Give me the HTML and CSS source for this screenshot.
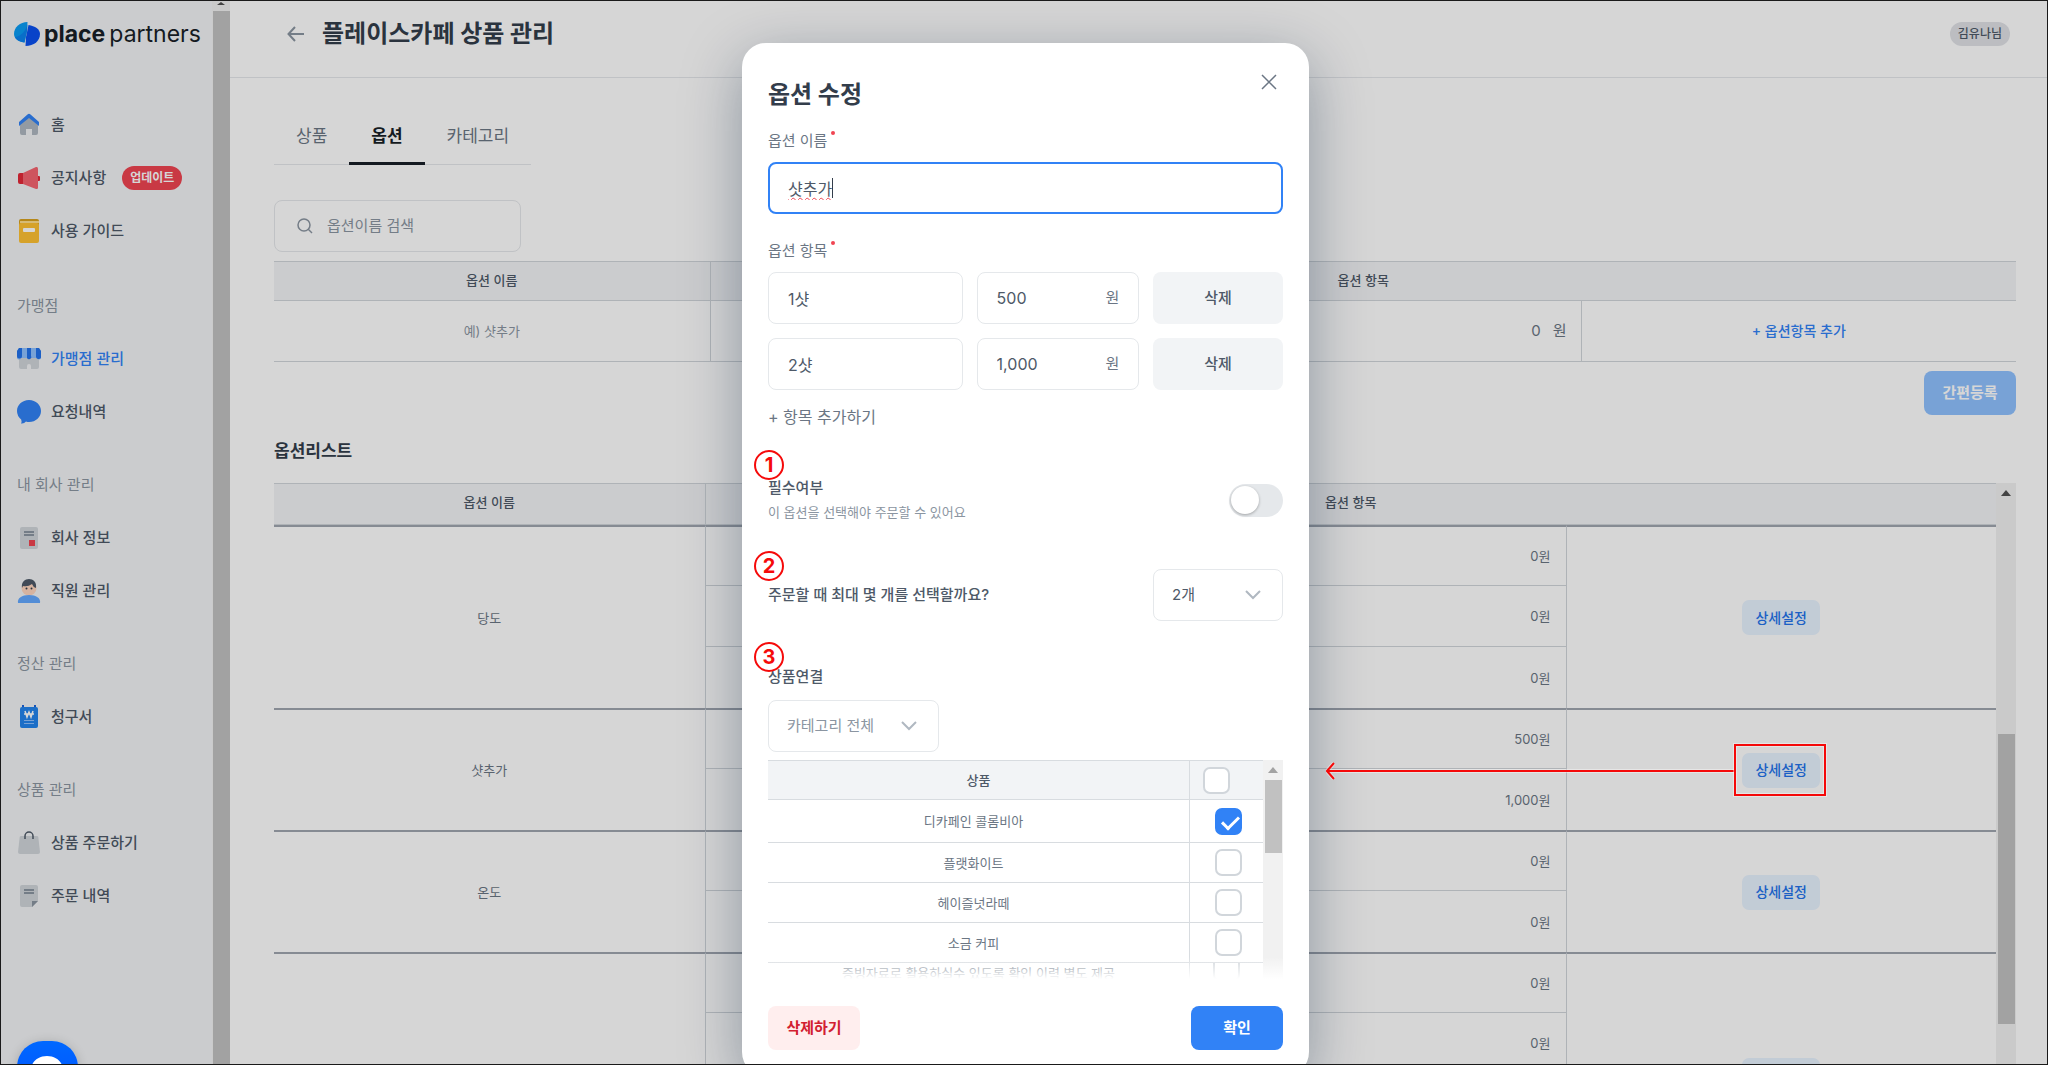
FILE: index.html
```html
<!DOCTYPE html>
<html lang="ko">
<head>
<meta charset="utf-8">
<meta name="viewport" content="width=device-width, initial-scale=1">
<title>플레이스카페 상품 관리</title>
<link rel="stylesheet" href="styles.css">
</head>
<body>
<div class="app">
  <aside class="sidebar">
    <div class="sidebar-body">
      <a class="logo" href="#">
        <svg width="26" height="24" viewBox="0 0 26 24" aria-hidden="true">
          <path d="M13.500 0 13 9 10.500 20.500C4 19.500 0 16.500 0 12 0 5 6 0 13.500 0z" fill="#0a9cf5"/>
          <path d="M13.500 2 13 9 10.500 20.500C6 20 2 18 1 15 8 14 12 8 13.500 2z" fill="#0b84f0"/>
          <path d="M14.500 3C21 4 26 7 26 12c0 7-6 12-14.500 12L12 15z" fill="#0a50f0"/>
        </svg>
        <span class="logo-text"><b>place</b><span>partners</span></span>
      </a>
      <nav class="menu">
        <ul class="menu-group menu-top">
          <li><a href="#"><svg viewBox="0 0 24 24"><path d="M3 10l9-7 9 7v10a2 2 0 0 1-2 2h-4v-6H9v6H5a2 2 0 0 1-2-2z" fill="#b0b8c1"/><path d="M2 9l8.500-7.500a2 2 0 0 1 3 0L22 9v4l-10-8L2 13z" fill="#3182f6"/></svg>홈</a></li>
          <li><a href="#"><svg viewBox="0 0 24 24"><rect x="20" y="10" width="3" height="5" rx="1" fill="#e42939"/><path d="M6 7l13-6q2-.500 2 1.500v19q0 2-2 1.500L6 18z" fill="#f66570"/><path d="M3 7h3v11H3a2 2 0 0 1-2-2V9a2 2 0 0 1 2-2z" fill="#e42939"/></svg>공지사항<em class="badge">업데이트</em></a></li>
          <li><a href="#"><svg viewBox="0 0 24 24"><rect x="2" y="0" width="20" height="8" rx="2" fill="#d8a11e"/><rect x="3" y="2" width="19" height="2" fill="#ffdf8d"/><rect x="2" y="4" width="20" height="20" rx="2" fill="#ffc233"/><rect x="6" y="9" width="12" height="4" rx="1" fill="#fff"/></svg>사용 가이드</a></li>
        </ul>
        <h2>가맹점</h2>
        <ul class="menu-group">
          <li><a class="active" href="#"><svg viewBox="0 0 24 24"><path d="M2 8h20v12a2 2 0 0 1-2 2h-6v-3a2 2 0 0 0-4 0v3H4a2 2 0 0 1-2-2z" fill="#d1d6db"/><path d="M2 1h20l2 3v6a2 2 0 0 1-4 1H4a2 2 0 0 1-4-1V4z" fill="#90c2ff"/><path d="M2 1h3v8a2 2 0 0 1-5 0V4zM10 1h4v8a2 2 0 0 1-4 2zM19 1h3l2 3v5a2 2 0 0 1-5 1z" fill="#2272eb"/></svg>가맹점 관리</a></li>
          <li><a href="#"><svg viewBox="0 0 24 24"><path d="M12 0c7 0 12 5 12 11s-5 11-12 11c-1 0-2 0-3-.500Q7 24 4 23.500q1-2 .200-4Q0 16 0 11C0 5 5 0 12 0z" fill="#3182f6"/></svg>요청내역</a></li>
        </ul>
        <h2>내 회사 관리</h2>
        <ul class="menu-group">
          <li><a href="#"><svg viewBox="0 0 24 24"><rect x="3" y="1" width="18" height="22" rx="2" fill="#d1d6db"/><path d="M7 5h10v2H7zM7 8h10v2H7z" fill="#8b95a1"/><rect x="12" y="14" width="6" height="6" fill="#f04452"/></svg>회사 정보</a></li>
          <li><a href="#"><svg viewBox="0 0 24 24"><circle cx="12" cy="9" r="7.500" fill="#ffd6bf"/><path d="M5 9C4 3 8 0 12 0s8 3 7 9q-3-1-4-4-4 3-9 2z" fill="#4e5968"/><circle cx="9.500" cy="9.500" r="1" fill="#333d4b"/><circle cx="14.500" cy="9.500" r="1" fill="#333d4b"/><path d="M1 24c-1-5 4-8 11-8s12 3 11 8z" fill="#64a8ff"/></svg>직원 관리</a></li>
        </ul>
        <h2>정산 관리</h2>
        <ul class="menu-group">
          <li><a href="#"><svg viewBox="0 0 24 24"><path d="M6 0v4M18 0v4" stroke="#1b64da" stroke-width="2"/><rect x="3" y="2" width="18" height="21" rx="2" fill="#2283ee"/><path d="M8 6l2 6 2-5 2 5 2-6M7 9h10" stroke="#fff" stroke-width="1.500" fill="none"/><path d="M7 15.500h10M7 18.500h10" stroke="#90c2ff" stroke-width="1"/></svg>청구서</a></li>
        </ul>
        <h2>상품 관리</h2>
        <ul class="menu-group">
          <li><a href="#"><svg viewBox="0 0 24 24"><path d="M4 5h16q1 0 1.300 1L23 21a2 2 0 0 1-2 2H3a2 2 0 0 1-2-2L2.700 6Q3 5 4 5z" fill="#d1d6db"/><path d="M8 8V5a4 4 0 0 1 8 0v3" fill="none" stroke="#4e5968" stroke-width="1.500"/></svg>상품 주문하기</a></li>
          <li><a href="#"><svg viewBox="0 0 24 24"><path d="M5 1h14a2 2 0 0 1 2 2v14l-6 6H5a2 2 0 0 1-2-2V3a2 2 0 0 1 2-2z" fill="#d1d6db"/><path d="M7 5h10v2H7zM7 8h10v2H7zM15 23v-6h6z" fill="#8b95a1"/></svg>주문 내역</a></li>
        </ul>
      </nav>
    </div>
    <div class="scrollbar side-scroll"><i class="arrow-up"></i><i class="thumb"></i></div>
  </aside>

  <main class="main">
    <header class="topbar">
      <button class="icon-btn" aria-label="뒤로"><svg width="18" height="16" viewBox="0 0 18 16"><path d="M17 8H2M8 1L1.500 8 8 15" fill="none" stroke="#8b95a1" stroke-width="2"/></svg></button>
      <h1>플레이스카페 상품 관리</h1>
      <span class="user">김유나님</span>
    </header>
    <div class="content">
      <nav class="tabs"><a href="#">상품</a><a href="#" class="on">옵션</a><a href="#">카테고리</a></nav>
      <label class="search">
        <svg width="16" height="16" viewBox="0 0 16 16"><circle cx="7" cy="7" r="6" fill="none" stroke="#8b95a1" stroke-width="1.500"/><path d="M11 11l4 4" stroke="#8b95a1" stroke-width="1.500"/></svg>
        <input type="search" placeholder="옵션이름 검색" aria-label="옵션이름 검색">
      </label>
      <table class="grid quick">
        <thead><tr><th>옵션 이름</th><th colspan="3">옵션 항목</th></tr></thead>
        <tbody><tr><td class="hint">예) 샷추가</td><td></td><td class="quick-price"><span>0</span><span>원</span></td><td><button class="link-btn">+ 옵션항목 추가</button></td></tr></tbody>
      </table>
      <button class="quick-btn">간편등록</button>
      <h2 class="list-title">옵션리스트</h2>
      <div class="list">
        <table class="grid options">
          <thead><tr><th>옵션 이름</th><th colspan="3">옵션 항목</th></tr></thead>
          <tbody>
            <tr><td rowspan="3">당도</td><td></td><td class="price">0원</td><td rowspan="3"><button class="detail">상세설정</button></td></tr>
            <tr><td></td><td class="price">0원</td></tr>
            <tr><td></td><td class="price">0원</td></tr>
          </tbody>
          <tbody>
            <tr><td rowspan="2">샷추가</td><td></td><td class="price">500원</td><td rowspan="2"><span class="marked"><button class="detail">상세설정</button><svg class="arrow" viewBox="0 0 408 18"><path d="M1 9h407M8 1L1 9l7 8" fill="none" stroke="#fff" stroke-opacity=".4" stroke-width="4"/><path d="M1 9h407M8 1L1 9l7 8" fill="none" stroke="#f50a0a" stroke-width="2"/></svg></span></td></tr>
            <tr><td></td><td class="price">1,000원</td></tr>
          </tbody>
          <tbody>
            <tr><td rowspan="2">온도</td><td></td><td class="price">0원</td><td rowspan="2"><button class="detail">상세설정</button></td></tr>
            <tr><td></td><td class="price">0원</td></tr>
          </tbody>
          <tbody>
            <tr><td rowspan="4"></td><td></td><td class="price">0원</td><td rowspan="4"><button class="detail">상세설정</button></td></tr>
            <tr><td></td><td class="price">0원</td></tr>
            <tr><td></td><td class="price">0원</td></tr>
            <tr><td></td><td class="price">0원</td></tr>
          </tbody>
        </table>
        <div class="scrollbar list-scroll"><i class="arrow-up"></i><i class="thumb"></i></div>
      </div>
    </div>
  </main>

  <div class="overlay">
    <section class="modal" role="dialog" aria-labelledby="dlg-title">
      <button class="close" aria-label="닫기"><svg width="16" height="16" viewBox="0 0 16 16"><path d="M1 1l14 14M15 1L1 15" stroke="#6b7684" stroke-width="1.500"/></svg></button>
      <h2 id="dlg-title">옵션 수정</h2>
      <label class="label required" for="opt-name">옵션 이름</label>
      <div class="name-box"><input id="opt-name" class="field focused" value="샷추가"><i class="caret"></i></div>
      <div class="label required">옵션 항목</div>
      <div class="items">
        <input class="field" value="1샷" aria-label="항목 1 이름">
        <label class="field won"><input value="500" aria-label="항목 1 가격"><span>원</span></label>
        <button class="gray">삭제</button>
        <input class="field" value="2샷" aria-label="항목 2 이름">
        <label class="field won"><input value="1,000" aria-label="항목 2 가격"><span>원</span></label>
        <button class="gray">삭제</button>
      </div>
      <button class="add">+ 항목 추가하기</button>

      <div class="section need">
        <i class="num">1</i>
        <label for="need">필수여부<small>이 옵션을 선택해야 주문할 수 있어요</small></label>
        <input id="need" type="checkbox" class="switch">
      </div>
      <div class="section max">
        <i class="num">2</i>
        <label for="max">주문할 때 최대 몇 개를 선택할까요?</label>
        <span class="select"><select id="max"><option>2개</option></select><svg width="16" height="10" viewBox="0 0 16 10"><path d="M1 1l7 7 7-7" fill="none" stroke="#b0b8c1" stroke-width="2"/></svg></span>
      </div>
      <div class="section link">
        <i class="num">3</i>
        <label for="cat">상품연결</label>
      </div>
      <span class="select category"><select id="cat"><option>카테고리 전체</option></select><svg width="16" height="10" viewBox="0 0 16 10"><path d="M1 1l7 7 7-7" fill="none" stroke="#b0b8c1" stroke-width="2"/></svg></span>
      <div class="products">
        <table>
          <thead><tr><th>상품</th><th class="pick"><input type="checkbox" aria-label="전체 선택"></th></tr></thead>
          <tbody>
            <tr><td>디카페인 콜롬비아</td><td class="pick"><input type="checkbox" checked aria-label="디카페인 콜롬비아"></td></tr>
            <tr><td>플랫화이트</td><td class="pick"><input type="checkbox" aria-label="플랫화이트"></td></tr>
            <tr><td>헤이즐넛라떼</td><td class="pick"><input type="checkbox" aria-label="헤이즐넛라떼"></td></tr>
            <tr><td>소금 커피</td><td class="pick"><input type="checkbox" aria-label="소금 커피"></td></tr>
            <tr class="cut"><td><div>증빙자료로 활용하실수 있도록 확인 이력 별도 제공</div></td><td class="pick"><div><input type="checkbox" aria-label="증빙자료"></div></td></tr>
          </tbody>
        </table>
        <div class="scrollbar product-scroll"><i class="arrow-up"></i><i class="thumb"></i></div>
      </div>
      <footer><button class="remove">삭제하기</button><button class="ok">확인</button></footer>
    </section>
  </div>
  <button class="chat" aria-label="채팅 상담"><svg width="32" height="32" viewBox="0 0 32 32"><path d="M16 0c9 0 16 6 16 14s-7 14-16 14l-7 4v-5C4 25 0 20 0 14 0 6 7 0 16 0z" fill="#fff"/></svg></button>
</div>
</body>
</html>
```
FILE: styles.css
```css
* { box-sizing: border-box; }
body {
  margin: 0;
  font-family: Inter, "Noto Sans CJK KR", sans-serif;
  font-size: 15px;
  line-height: 20px;
  color: #4e5968;
}
button, input, select { font: inherit; color: inherit; }
button { border: 0; padding: 0; background: none; cursor: pointer; white-space: nowrap; }
a { color: inherit; text-decoration: none; }
h1, h2, ul { margin: 0; padding: 0; list-style: none; }
svg { display: block; flex: none; }

.app {
  position: relative;
  display: flex;
  height: 100vh;
  border: 1px solid #1a1a1a;
  background: #fff;
  overflow: hidden;
}

/* Scrollbars */
.scrollbar { background: #f1f1f1; flex: none; display: flex; flex-direction: column; align-items: center; }
.thumb { background: #c1c1c1; width: 17px; }
.arrow-up { border: 5px solid transparent; border-top: 0; border-bottom: 6px solid #505050; }

/* Sidebar */
.sidebar { display: flex; flex: none; width: 229px; background: #f2f4f6; }
.sidebar-body { flex: 1; padding: 20px 0 0 13px; }
.logo { display: flex; align-items: center; gap: 4px; height: 26px; color: #191f28; }
.logo-text { display: flex; gap: 4px; font-size: 23px; line-height: 26px; }
.logo-text b { font-weight: 700; }
.menu { padding: 51px 0 0 3px; }
.menu h2 { font-size: 15px; font-weight: 400; line-height: 53px; color: #8b95a1; }
.menu a { display: flex; align-items: center; gap: 10px; height: 53px; font-weight: 500; }
.menu a svg { width: 24px; height: 24px; }
.menu-group { margin-bottom: 20px; }
.menu-top { margin-bottom: 22px; }
.menu .active { color: #3182f6; }
.badge {
  margin-left: 6px; padding: 0 8px; border-radius: 12px;
  font-size: 12px; font-weight: 700; font-style: normal; line-height: 24px;
  background: #f04452; color: #fff;
}
.side-scroll { width: 18px; padding-top: 1px; }
.side-scroll .arrow-up { border-width: 0 4px 3px; margin-bottom: 6px; }
.side-scroll .thumb { flex: 1; }

/* Page */
.main { flex: 1; min-width: 0; }
.topbar { display: flex; align-items: center; height: 77px; padding: 0 37px 11px 57px; border-bottom: 1px solid #e5e8eb; }
.topbar h1 { margin-left: 17px; font-size: 24px; line-height: 32px; color: #333d4b; }
.user { margin-left: auto; padding: 0 8px; border-radius: 12px; background: #e0e2e6; font-size: 12px; font-weight: 500; line-height: 24px; }
.content { display: flex; flex-direction: column; align-items: flex-start; padding: 33px 31px 0 44px; }
.tabs { display: flex; border-bottom: 1px solid #e5e8eb; font-size: 17px; line-height: 51px; color: #6b7684; }
.tabs a { padding: 0 22px; border-bottom: 3px solid transparent; margin-bottom: -1px; }
.tabs .on { color: #191f28; font-weight: 700; border-color: #191f28; }
.search {
  display: flex; align-items: center; gap: 14px;
  width: 247px; height: 52px; margin-top: 35px; padding: 0 22px;
  border: 1px solid #e5e8eb; border-radius: 8px;
}
.search input { flex: 1; min-width: 0; border: 0; padding: 0; background: none; outline: 0; }
.search input::placeholder { color: #8b95a1; opacity: 1; }

.grid { width: 100%; table-layout: fixed; border-collapse: separate; border-spacing: 0; font-size: 13px; text-align: center; }
.grid th, .grid td { padding: 0; border-bottom: 1px solid #d1d6db; }
.grid th { height: 40px; padding-bottom: 2px; background: #f2f4f6; border-top: 1px solid #d1d6db; font-weight: 500; }
.grid th + th, .grid td + td, .options .price, .options tr:not(:first-child) td { border-left: 1px solid #d1d6db; }
.grid td { height: 61px; color: #6b7684; }
.quick { margin-top: 9px; }
.grid .hint { color: #8b95a1; }
.grid .quick-price { padding-right: 14px; text-align: right; font-size: 15px; }
.quick-price span + span { margin-left: 12px; }
.link-btn { font-size: 14px; font-weight: 500; color: #3182f6; }
.quick-btn { align-self: flex-end; width: 92px; height: 44px; margin-top: 9px; border-radius: 8px; background: #90c2ff; color: #fff; font-weight: 700; }
.list-title { margin: 23px 0 19px; font-size: 17px; line-height: 26px; color: #333d4b; }
.list { display: flex; width: 100%; }
.grid.options { width: calc(100% - 20px); }
.options th { height: 42px; padding-bottom: 4px; }
.options tr:first-child td { border-top: 2px solid #a0a6b0; }
.options td[rowspan], .options tr:last-child td { border-bottom: 0; }
.options .price { padding-right: 15px; text-align: right; }
.detail { width: 78px; height: 35px; border-radius: 7px; background: #e8f3ff; color: #2272eb; font-size: 14px; font-weight: 500; }
.list-scroll { width: 20px; padding-top: 7px; }
.list-scroll .arrow-up { margin-bottom: 238px; }
.list-scroll .thumb { height: 290px; }

.marked { position: relative; display: inline-block; }
.marked::after {
  content: ""; position: absolute; z-index: 20; inset: -9px -6px -8px -8px;
  border: 2px solid #f50a0a; box-shadow: 0 0 0 1px rgba(255, 255, 255, .4), inset 0 0 0 1px rgba(255, 255, 255, .4);
}
.arrow { position: absolute; z-index: 20; right: calc(100% + 8px); top: 9px; width: 408px; height: 18px; }

/* Dialog */
.overlay {
  position: absolute; z-index: 10; inset: 0;
  display: flex; justify-content: center; align-items: flex-start;
  padding: 42px 0 0 3px; background: rgba(0, 0, 0, .16); overflow: hidden;
}
.modal {
  position: relative; flex: none; width: 567px; padding: 35px 26px 26px;
  border-radius: 24px; background: #fff; box-shadow: 0 16px 60px rgba(0, 29, 58, .35);
}
.close { position: absolute; top: 31px; right: 32px; }
.modal h2 { margin-bottom: 19px; font-size: 24px; line-height: 34px; color: #333d4b; }
.label { display: block; width: fit-content; margin-bottom: 11px; color: #6b7684; }
.required { position: relative; }
.required::after { content: ""; position: absolute; top: 0; right: -8px; width: 4px; height: 4px; border-radius: 50%; background: #f04452; }
.field { width: 100%; min-width: 0; height: 52px; padding: 0 19px; border: 1px solid #e5e8eb; border-radius: 8px; background: #fff; font-size: 16px; outline: 0; }
.name-box { position: relative; margin-bottom: 27px; }
.focused { display: block; padding: 0 18px; border: 2px solid #3182f6; text-decoration: underline wavy #f04452 1px; text-underline-offset: 2px; }
.caret { position: absolute; left: 64px; top: 16px; width: 1px; height: 20px; background: #333d4b; }
.items { display: grid; grid-template-columns: minmax(0, 195fr) minmax(0, 163fr) minmax(0, 130fr); gap: 14px; }
.won { display: flex; align-items: center; }
.won input { flex: 1; min-width: 0; padding: 0; border: 0; outline: 0; }
.won span { font-size: 15px; color: #6b7684; }
.gray { border-radius: 8px; background: #f2f4f6; font-weight: 500; }
.add { display: block; margin-top: 17px; font-size: 16px; color: #6b7684; }
.section { position: relative; display: flex; align-items: center; justify-content: space-between; }
.section label { font-weight: 500; }
.section small { display: block; margin-top: 4px; font-size: 13px; font-weight: 400; color: #8b95a1; }
.num {
  position: absolute; left: -14px; width: 30px; height: 30px;
  border: 2px solid #f50a0a; border-radius: 50%;
  font-size: 20px; font-weight: 700; font-style: normal; line-height: 26px; text-align: center; color: #f50a0a;
}
.need { margin-top: 51px; }
.need .num { top: -28px; }
.max { margin-top: 47px; }
.max .num { top: -18px; }
.link { margin: 46px 0 13px; }
.link .num { top: -25px; }
.switch { appearance: none; position: relative; width: 54px; height: 33px; margin: 0; border-radius: 17px; background: #e5e8eb; }
.switch::before { content: ""; position: absolute; left: 2px; top: 2px; width: 28px; height: 28px; border-radius: 50%; background: #fff; box-shadow: 0 1px 3px rgba(0, 0, 0, .3); }
.select { position: relative; display: block; width: 130px; height: 52px; }
.select select { appearance: none; width: 100%; height: 100%; padding: 0 18px; border: 1px solid #e5e8eb; border-radius: 8px; background: #fff; outline: 0; }
.select svg { position: absolute; right: 22px; top: 21px; pointer-events: none; }
.category { width: 171px; color: #8b95a1; }
.products { position: relative; display: flex; height: 219px; margin-top: 8px; overflow: hidden; }
.products::after { content: ""; position: absolute; inset: auto 0 0; height: 22px; background: linear-gradient(rgba(255, 255, 255, 0), #fff); }
.products table { width: calc(100% - 20px); table-layout: fixed; border-collapse: separate; border-spacing: 0; font-size: 13px; text-align: center; color: #6b7684; }
.products th, .products td { height: 40px; padding: 0 10px 0 0; border-bottom: 1px solid #d8dce0; }
.products th { height: 40px; padding: 0; background: #f2f4f6; border-top: 1px solid #d8dce0; font-weight: 500; color: #4e5968; }
.products tbody tr:first-child td { height: 43px; }
.products .pick { width: 74px; padding: 0 0 0 4px; border-left: 1px solid #d8dce0; }
.products th.pick { padding: 0 20px 0 0; }
.pick input { appearance: none; display: block; width: 27px; height: 27px; margin: 0 auto; border: 2px solid #d1d6db; border-radius: 7px; background: #fff; }
.pick input:checked { border-color: #3182f6; background: #3182f6; }
.pick input:checked::after { content: ""; display: block; width: 14px; height: 7px; margin: 6px 0 0 5px; border: solid #fff; border-width: 0 0 3px 3px; transform: rotate(-45deg); }
.products .cut td { padding: 0; vertical-align: top; }
.cut div { height: 20px; overflow: hidden; }
.cut .pick input { margin-top: -8px; }
.product-scroll { width: 20px; padding-top: 7px; }
.product-scroll .arrow-up { border-bottom-color: #a3a3a3; margin-bottom: 7px; }
.product-scroll .thumb { height: 73px; }
.modal footer { display: flex; justify-content: space-between; margin-top: 27px; }
.modal footer button { width: 92px; height: 44px; border-radius: 8px; font-weight: 700; }
.remove { background: #ffeeee; color: #d22030; }
.ok { background: #3182f6; color: #fff; }

/* Chat launcher */
.chat {
  position: absolute; z-index: 30; left: 16px; bottom: -38px; width: 61px; height: 61px; padding: 14px;
  border-radius: 26px; background: linear-gradient(#0068ff, #0050ff); box-shadow: 0 2px 12px rgba(0, 0, 0, .2);
}
```
